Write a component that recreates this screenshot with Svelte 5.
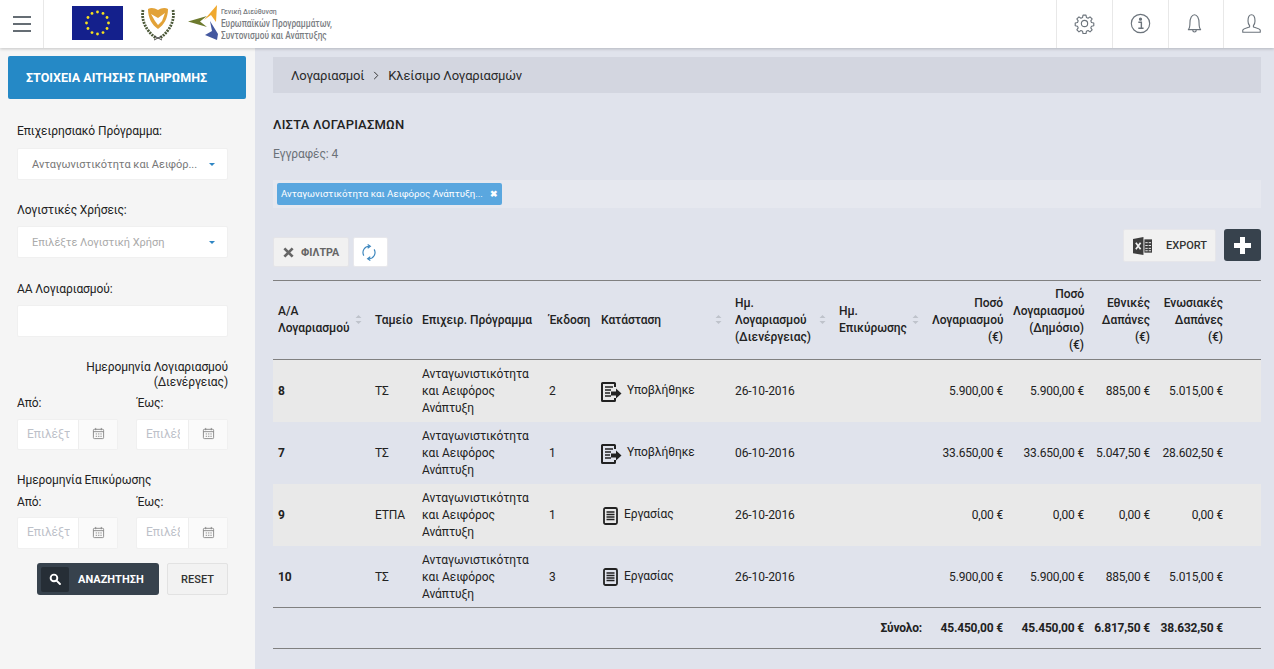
<script>
  const rows = [
    { id: 8, fund: 'ΤΣ', version: 2, status: 'sub', label: 'Υποβλήθηκε', date: '26-10-2016', a: '5.900,00 €', b: '5.900,00 €', c: '885,00 €', d: '5.015,00 €' },
    { id: 7, fund: 'ΤΣ', version: 1, status: 'sub', label: 'Υποβλήθηκε', date: '06-10-2016', a: '33.650,00 €', b: '33.650,00 €', c: '5.047,50 €', d: '28.602,50 €' },
    { id: 9, fund: 'ΕΤΠΑ', version: 1, status: 'work', label: 'Εργασίας', date: '26-10-2016', a: '0,00 €', b: '0,00 €', c: '0,00 €', d: '0,00 €' },
    { id: 10, fund: 'ΤΣ', version: 3, status: 'work', label: 'Εργασίας', date: '26-10-2016', a: '5.900,00 €', b: '5.900,00 €', c: '885,00 €', d: '5.015,00 €' }
  ];
  const stars = Array.from({ length: 12 }, (_, i) => {
    const t = (i * Math.PI) / 6;
    return { x: 25.5 + 11 * Math.sin(t), y: 17 - 11 * Math.cos(t) };
  });
</script>

{#snippet calendar()}
  <svg viewBox="0 0 14 14" width="13" height="13" fill="none" stroke="#888" stroke-width="1">
    <rect x="1.5" y="2.5" width="11" height="10" rx="1" />
    <path d="M1.5 5h11M4 1v2.5M10 1v2.5" />
    <path d="M4 7.5h1.5M6.5 7.5H8M9 7.5h1.5M4 10h1.5M6.5 10H8M9 10h1.5" />
  </svg>
{/snippet}

{#snippet sort()}
  <svg class="sort" viewBox="0 0 7 11" width="7" height="11" fill="#bfc3cb">
    <path d="M3.5 1 6.500 4h-6zM3.500 10 .5 7h6z" />
  </svg>
{/snippet}

{#snippet dateInput(wide)}
  <div class="date" class:wide>
    <span class="date-text">Επιλέξτε</span>
    <span class="date-btn">{@render calendar()}</span>
  </div>
{/snippet}

<header class="topbar">
  <button class="burger" aria-label="Μενού">
    <span></span><span></span><span></span>
  </button>
  <div class="logos">
    <svg class="eu" viewBox="0 0 51 34" width="51" height="34">
      <rect width="51" height="34" fill="#14208c" />
      {#each stars as s}
        <circle cx={s.x} cy={s.y} r="1.400" fill="#f7e11e" />
      {/each}
    </svg>
    <svg class="cy" viewBox="0 0 36 37" width="36" height="37">
      <path d="M3 6C1 16 6 27 16 34M33 6C35 16 30 27 20 34" fill="none" stroke="#4d5a3a" stroke-width="2.800" stroke-dasharray="2 1" />
      <path d="M8 5C11 3 15 4 18 6 21 4 25 3 28 5 28 14 24 21 18 25 12 21 8 14 8 5Z" fill="#e2a238" />
      <path d="M11 10 18 14 25 9 22 17 18 21 15 17Z" fill="#fff" />
      <path d="M14 36 22 32M22 36 14 32" stroke="#444" stroke-width="1" />
    </svg>
    <svg class="arrows" viewBox="0 0 33 37" width="33" height="37">
      <path d="M0 17.500 19 12 12 17.500 19 23Z" fill="#6d7a2e" />
      <path d="M29 1 28 18 23 11 16 16Z" fill="#f0a92e" />
      <path d="M22 17 30 30 29 36 17 31 24 27Z" fill="#44589f" />
    </svg>
    <div class="logo-text">
      <span class="l1">Γενική Διεύθυνση</span>
      <span class="l2">Ευρωπαϊκών Προγραμμάτων,</span>
      <span class="l2">Συντονισμού και Ανάπτυξης</span>
    </div>
  </div>
  <div class="top-icons">
    <div class="top-cell">
      <svg viewBox="0 0 24 24" width="21" height="21" fill="none" stroke="#6c747c" stroke-width="1.300" stroke-linejoin="round">
        <circle cx="12" cy="12" r="3.600" />
        <path d="M10.300 2.500h3.400l.5 2.600 1.900.8 2.200-1.500 2.400 2.400-1.500 2.200.8 1.900 2.600.5v3.200l-2.600.5-.8 1.900 1.500 2.200-2.400 2.400-2.200-1.500-1.900.8-.5 2.600h-3.400l-.5-2.600-1.900-.8-2.200 1.500-2.400-2.400 1.500-2.200-.8-1.900-2.600-.5v-3.200l2.600-.5.8-1.900-1.500-2.200 2.400-2.400 2.200 1.500 1.900-.8z" />
      </svg>
    </div>
    <div class="top-cell">
      <svg viewBox="0 0 24 24" width="21" height="21" fill="none" stroke="#6c747c" stroke-width="1.300">
        <circle cx="12" cy="12" r="10.500" />
        <circle cx="12" cy="7" r="1.200" fill="#6c747c" />
        <path d="M9.500 10.500H13V17M9.500 17.500h6" stroke-width="1.600" />
      </svg>
    </div>
    <div class="top-cell bell">
      <svg viewBox="0 0 24 24" width="21" height="21" fill="none" stroke="#6c747c" stroke-width="1.300" stroke-linejoin="round">
        <path d="M5 19c1.500-1.500 1.800-3 1.800-7.500C6.800 6 9 2 12 2s5.200 4 5.200 9.500c0 4.500.3 6 1.800 7.500z" />
        <path d="M10 19.500c0 3 4 3 4 0" />
      </svg>
    </div>
    <div class="top-cell user">
      <svg viewBox="0 0 24 24" width="21" height="21" fill="none" stroke="#6c747c" stroke-width="1.300" stroke-linejoin="round">
        <path d="M8 9c0-4.500 1.500-7 4-7s4 2.500 4 7c0 2.500-1 4.500-1.800 5.500v1.500c2 1 6.800 1.500 7.800 3.500v2.500H2v-2.500c1-2 5.800-2.500 7.800-3.500v-1.500C9 13.500 8 11.500 8 9z" />
      </svg>
    </div>
  </div>
</header>

<div class="page">
  <aside class="side">
    <div class="side-title">ΣΤΟΙΧΕΙΑ ΑΙΤΗΣΗΣ ΠΛΗΡΩΜΗΣ</div>

    <div class="field-label first">Επιχειρησιακό Πρόγραμμα:</div>
    <div class="select">
      <span class="sel-val">Ανταγωνιστικότητα και Αειφόρ...</span>
      <span class="caret"></span>
    </div>

    <div class="field-label second">Λογιστικές Χρήσεις:</div>
    <div class="select">
      <span class="sel-ph">Επιλέξτε Λογιστική Χρήση</span>
      <span class="caret"></span>
    </div>

    <div class="field-label third">ΑΑ Λογιαριασμού:</div>
    <div class="text-input"></div>

    <div class="date-title right">Ημερομηνία Λογιαριασμού<br />(Διενέργειας)</div>
    <div class="date-row">
      <div class="date-col"><div class="from">Από:</div>{@render dateInput(true)}</div>
      <div class="date-col"><div class="from to">Έως:</div>{@render dateInput(false)}</div>
    </div>

    <div class="date-title second">Ημερομηνία Επικύρωσης</div>
    <div class="date-row tight">
      <div class="date-col"><div class="from">Από:</div>{@render dateInput(true)}</div>
      <div class="date-col"><div class="from to">Έως:</div>{@render dateInput(false)}</div>
    </div>

    <div class="side-actions">
      <button class="search">
        <span class="search-ico">
          <svg viewBox="0 0 14 14" width="12" height="12" fill="none" stroke="#fff" stroke-width="2.200">
            <circle cx="5.800" cy="5.800" r="3.900" />
            <path d="m8.800 8.800 4 4" stroke-linecap="round" />
          </svg>
        </span>
        ΑΝΑΖΗΤΗΣΗ
      </button>
      <button class="reset">RESET</button>
    </div>
  </aside>

  <main class="content">
    <nav class="crumbs">
      <span>Λογαριασμοί</span>
      <svg viewBox="0 0 6 10" width="6" height="9" fill="none" stroke="#333" stroke-width="1.100"><path d="m1 1 4 4-4 4" /></svg>
      <span>Κλείσιμο Λογαριασμών</span>
    </nav>

    <h1>ΛΙΣΤΑ ΛΟΓΑΡΙΑΣΜΩΝ</h1>
    <div class="count">Εγγραφές: 4</div>

    <div class="chips">
      <span class="chip">Ανταγωνιστικότητα και Αειφόρος Ανάπτυξη...<b>✖</b></span>
    </div>

    <div class="toolbar">
      <div class="tool-left">
        <button class="filters">
          <svg viewBox="0 0 12 12" width="11" height="11" fill="none" stroke="#666" stroke-width="3"><path d="m1.500 1.500 9 9M10.500 1.500l-9 9" /></svg>
          ΦΙΛΤΡΑ
        </button>
        <button class="refresh" aria-label="Ανανέωση">
          <svg viewBox="0 0 18 18" width="16" height="17" fill="none" stroke="#3a85bd" stroke-width="1.300">
            <path d="M3.200 12.500A7 7 0 0 1 9.500 2M14.800 5.500A7 7 0 0 1 8.500 16" />
            <path d="m7.500 0 3 2-3 2.200M10.500 13.800l-3 2.200 3 2" />
          </svg>
        </button>
      </div>
      <div class="tool-right">
        <button class="export">
          <svg viewBox="0 0 20 20" width="19" height="20">
            <path d="M0 2.500 11 .5v19L0 17.500z" fill="#3d3d3d" />
            <path d="M12 3h8v14h-8z" fill="#3d3d3d" />
            <path d="M13 6.500h2.500M16.500 6.500H19M13 9.500h2.500M16.500 9.500H19M13 12.500h2.500M16.500 12.500H19M13 15h2.500M16.500 15H19" stroke="#f1f1f1" stroke-width="1" />
            <path d="m3 6.500 5 7M8 6.500l-5 7" stroke="#f1f1f1" stroke-width="1.800" />
          </svg>
          <span>EXPORT</span>
        </button>
        <button class="add" aria-label="Προσθήκη">
          <svg viewBox="0 0 17 17" width="17" height="17" fill="#fff"><path d="M6 0h5v6h6v5h-6v6H6v-6H0V6h6z" /></svg>
        </button>
      </div>
    </div>

    <table>
      <colgroup>
        <col style="width:97px" /><col style="width:47px" /><col style="width:127px" /><col style="width:52px" />
        <col style="width:134px" /><col style="width:104px" /><col style="width:93px" /><col style="width:81px" />
        <col style="width:81px" /><col style="width:66px" /><col style="width:73px" /><col />
      </colgroup>
      <thead>
        <tr>
          <th><div class="th-sort">A/A<br />Λογαριασμού{@render sort()}</div></th>
          <th>Ταμείο</th>
          <th>Επιχειρ. Πρόγραμμα</th>
          <th>Έκδοση</th>
          <th><div class="th-sort">Κατάσταση{@render sort()}</div></th>
          <th><div class="th-sort">Ημ.<br />Λογαριασμού<br />(Διενέργειας){@render sort()}</div></th>
          <th><div class="th-sort">Ημ.<br />Επικύρωσης{@render sort()}</div></th>
          <th class="num">Ποσό<br />Λογαριασμού<br />(€)</th>
          <th class="num">Ποσό<br />Λογαριασμού<br />(Δημόσιο)<br />(€)</th>
          <th class="num">Εθνικές<br />Δαπάνες<br />(€)</th>
          <th class="num">Ενωσιακές<br />Δαπάνες<br />(€)</th>
          <th></th>
        </tr>
      </thead>
      <tbody>
        {#each rows as row, i}
          <tr class:odd={i % 2 === 0}>
            <td class="strong">{row.id}</td>
            <td>{row.fund}</td>
            <td>Ανταγωνιστικότητα και Αειφόρος Ανάπτυξη</td>
            <td>{row.version}</td>
            <td>
              <div class="status">
                {#if row.status === 'sub'}
                  <svg viewBox="0 0 21 20" width="21" height="20" fill="none" stroke="#222" stroke-width="2">
                    <path d="M14 5V1.500a.5.500 0 0 0-.5-.5H1.500a.5.500 0 0 0-.5.5v17a.5.500 0 0 0 .5.5h12a.5.500 0 0 0 .5-.5V16" />
                    <path d="M4 5h8M4 8h6M4 11h5M4 14h6" stroke-width="1.400" />
                    <path d="M10 9.500h5V6.500l5.500 5-5.500 5v-3h-5z" fill="#222" stroke="none" />
                  </svg>
                {:else}
                  <svg class="doc" viewBox="0 0 15 18" width="15" height="18" fill="none" stroke="#222" stroke-width="1.800">
                    <rect x="1" y="1" width="13" height="16" rx="1.500" />
                    <path d="M3.500 5h8M3.500 7.500h8M3.500 10h8M3.500 12.500h8" stroke-width="1.400" />
                  </svg>
                {/if}
                <span>{row.label}</span>
              </div>
            </td>
            <td>{row.date}</td>
            <td></td>
            <td class="num">{row.a}</td>
            <td class="num">{row.b}</td>
            <td class="num">{row.c}</td>
            <td class="num">{row.d}</td>
            <td></td>
          </tr>
        {/each}
      </tbody>
      <tfoot>
        <tr>
          <td colspan="7" class="num">Σύνολο:</td>
          <td class="num">45.450,00 €</td>
          <td class="num">45.450,00 €</td>
          <td class="num">6.817,50 €</td>
          <td class="num">38.632,50 €</td>
          <td></td>
        </tr>
      </tfoot>
    </table>
  </main>
</div>

<style>
  :global(body) {
    margin: 0;
    font-family: Roboto, "Noto Sans", sans-serif;
    font-size: 12px;
    color: #222;
    background: #e0e3ec;
  }

  button {
    font-family: inherit;
    cursor: pointer;
  }

  .topbar {
    display: flex;
    align-items: stretch;
    height: 48px;
    background: #fff;
    box-shadow: 0 1px 3px rgba(0, 0, 0, 0.2);
    position: relative;
  }

  .burger {
    width: 44px;
    border: 0;
    border-right: 1px solid #e8e8e8;
    background: none;
    padding: 0 0 0 13px;
    display: flex;
    flex-direction: column;
    justify-content: center;
    gap: 5px;
  }

  .burger span {
    display: block;
    width: 18px;
    height: 2px;
    background: #656d74;
  }

  .logos {
    display: flex;
    align-items: center;
    margin-left: 28px;
    flex: 1;
  }

  .eu {
    margin-top: -2px;
  }

  .cy {
    margin: -3px 0 0 17px;
  }

  .arrows {
    margin: -3px 0 0 12px;
  }

  .logo-text {
    display: flex;
    flex-direction: column;
    margin: -1px 0 0 0;
    color: #7a7d82;
    font-weight: 500;
    line-height: 12px;
  }

  .logo-text span {
    display: block;
    transform-origin: left center;
    white-space: nowrap;
  }

  .l1 {
    font-size: 8px;
    transform: scaleX(0.86);
  }

  .l2 {
    font-size: 10px;
    transform: scaleX(0.83);
  }

  .top-icons {
    display: flex;
  }

  .top-cell {
    width: 56px;
    border-left: 1px solid #e8e8e8;
    display: flex;
    align-items: center;
    justify-content: center;
    padding-bottom: 2px;
    box-sizing: border-box;
  }

  .top-cell.bell {
    width: 55px;
    padding-right: 4px;
  }

  .top-cell.user {
    width: 51px;
    padding-left: 5px;
  }

  .page {
    display: flex;
    min-height: 621px;
  }

  .side {
    width: 255px;
    box-sizing: border-box;
    background: #f5f5f5;
    padding: 8px 27px 0 17px;
    flex: none;
  }

  .side-title {
    margin: 0 -0.5px 0 -9px;
    height: 43px;
    width: 238px;
    line-height: 43px;
    padding-left: 18px;
    box-sizing: border-box;
    background: #2589c6;
    color: #fff;
    font-weight: 700;
    font-size: 12.5px;
    border-radius: 2px;
  }

  .field-label,
  .date-title,
  .from {
    color: #222;
    font-size: 12px;
    letter-spacing: -0.1px;
    line-height: 15px;
  }

  .field-label.first {
    margin: 25px 0 9px;
  }

  .field-label.second {
    margin: 23px 0 8px;
  }

  .field-label.third {
    margin: 24px 0 8px;
  }

  .select,
  .text-input {
    height: 32px;
    box-sizing: border-box;
    background: #fff;
    border: 1px solid #f0f0f0;
    border-radius: 2px;
    display: flex;
    align-items: center;
    justify-content: space-between;
    padding: 0 12px 0 14px;
    font-size: 11px;
    letter-spacing: -0.03px;
  }

  .sel-val {
    color: #777;
  }

  .sel-ph {
    color: #aaa;
  }

  .caret {
    border: 3.500px solid transparent;
    border-top: 3.500px solid #2f86c4;
    border-bottom: 0;
  }

  .date-title.right {
    text-align: right;
    margin-top: 23px;
  }

  .date-title.second {
    margin-top: 23px;
  }

  .date-row {
    display: flex;
    justify-content: space-between;
    margin-top: 6px;
  }

  .date-row.tight {
    margin-top: 7px;
  }

  .from {
    margin-bottom: 8px;
  }

  .from.to {
    padding-left: 1px;
  }

  .date-row.tight .from {
    margin-bottom: 7px;
  }

  .date {
    display: flex;
    height: 31px;
    width: 92px;
    border-radius: 2px;
    background: #fff;
    border: 1px solid #f0f0f0;
    box-sizing: border-box;
    overflow: hidden;
  }

  .date-row.tight .date {
    height: 32px;
  }

  .date.wide {
    width: 101px;
  }

  .date-text {
    flex: 1;
    min-width: 0;
    overflow: hidden;
    white-space: nowrap;
    margin: 0 8px 0 9px;
    line-height: 29px;
    color: #bdc1c9;
    font-size: 12px;
  }

  .date-btn {
    width: 39px;
    flex: none;
    background: #fafafa;
    border-left: 1px solid #eee;
    display: flex;
    align-items: center;
    justify-content: center;
    padding-bottom: 2px;
    box-sizing: border-box;
  }

  .side-actions {
    display: flex;
    justify-content: flex-end;
    gap: 8px;
    margin-top: 14px;
  }

  .search {
    width: 122px;
    height: 32px;
    background: #37424d;
    border: 0;
    border-radius: 3px;
    color: #fff;
    font-weight: 700;
    font-size: 11px;
    display: flex;
    align-items: center;
    padding: 0 0 0 4px;
    gap: 9px;
  }

  .search-ico {
    width: 28px;
    height: 25px;
    background: #262e36;
    border-radius: 2px;
    display: flex;
    align-items: center;
    justify-content: center;
  }

  .reset {
    width: 61px;
    height: 32px;
    background: #f2f2f2;
    border: 1px solid #e2e2e2;
    border-radius: 2px;
    color: #333;
    font-weight: 500;
    font-size: 11px;
    padding: 0;
  }

  .content {
    flex: 1;
    min-width: 0;
    padding: 9px 13px 20px 18px;
  }

  .crumbs {
    height: 36px;
    background: #d3d6e0;
    display: flex;
    align-items: center;
    gap: 9px;
    padding-left: 18px;
    font-size: 13px;
    letter-spacing: -0.13px;
    color: #2a2a2a;
  }

  h1 {
    margin: 24px 0 0;
    font-size: 13px;
    letter-spacing: 0.2px;
    line-height: 16px;
    font-weight: 500;
    color: #222;
  }

  .count {
    margin-top: 14px;
    color: #6b7178;
    line-height: 15px;
    letter-spacing: -0.1px;
  }

  .chips {
    margin-top: 18px;
    height: 28px;
    background: #e6e8ef;
    display: flex;
    align-items: center;
    padding-left: 4px;
  }

  .chip {
    background: #5aa7df;
    color: #fff;
    font-size: 9.700px;
    height: 22px;
    line-height: 22px;
    width: 225px;
    padding: 0 4px;
    box-sizing: border-box;
    border-radius: 2px;
    display: flex;
    justify-content: space-between;
    white-space: nowrap;
  }

  .chip b {
    font-size: 9px;
  }

  .toolbar {
    display: flex;
    justify-content: space-between;
    align-items: flex-start;
    height: 51px;
    margin-top: 21px;
  }

  .tool-left {
    display: flex;
    gap: 4px;
    padding-top: 8px;
  }

  .filters {
    width: 76px;
    height: 30px;
    background: #f1f1f1;
    border: 1px solid #e4e4e8;
    border-radius: 2px;
    color: #666;
    font-weight: 700;
    font-size: 10.700px;
    display: flex;
    align-items: center;
    gap: 7px;
    padding: 0 0 0 9px;
  }

  .refresh {
    width: 35px;
    height: 30px;
    background: #fff;
    border: 1px solid #e8e8ec;
    border-radius: 2px;
    padding: 0 3px 0 0;
    display: flex;
    align-items: center;
    justify-content: center;
  }

  .tool-right {
    display: flex;
    gap: 8px;
  }

  .export {
    width: 93px;
    height: 33px;
    background: #f1f1f1;
    border: 1px solid #e6e6ea;
    border-radius: 2px;
    display: flex;
    align-items: center;
    padding: 0 0 0 9px;
    color: #333;
    font-weight: 500;
    font-size: 11px;
  }

  .export span {
    margin-left: 14px;
  }

  .add {
    width: 37px;
    height: 32px;
    background: #37424d;
    border: 0;
    border-radius: 3px;
    padding: 0;
    display: flex;
    align-items: center;
    justify-content: center;
  }

  table {
    width: 988px;
    table-layout: fixed;
    border-collapse: collapse;
    border-top: 1px solid #808080;
    border-bottom: 1px solid #808080;
  }

  th {
    height: 79px;
    padding: 0 5px;
    box-sizing: border-box;
    border-bottom: 1px solid #808080;
    text-align: left;
    font-weight: 500;
    font-size: 12px;
    letter-spacing: -0.05px;
    line-height: 17px;
    white-space: nowrap;
  }

  .th-sort {
    position: relative;
  }

  .sort {
    position: absolute;
    right: 3px;
    top: 50%;
    margin-top: -6px;
  }

  td {
    padding: 2px 5px 0;
    height: 62px;
    box-sizing: border-box;
    line-height: 17px;
    font-size: 12px;
    letter-spacing: -0.08px;
    white-space: normal;
  }

  tr.odd td {
    background: #e9e9e9;
  }

  .strong {
    font-weight: 700;
  }

  th.num,
  td.num {
    text-align: right;
  }

  td.num {
    letter-spacing: -0.18px;
    white-space: nowrap;
  }

  tfoot td {
    height: 41px;
    padding-top: 0;
    font-weight: 700;
    border-top: 1px solid #808080;
  }

  .status {
    display: flex;
    align-items: center;
    gap: 5px;
  }

  .doc {
    margin: 0 1px 0 2px;
  }

  .status span {
    margin-top: -2px;
  }
</style>
